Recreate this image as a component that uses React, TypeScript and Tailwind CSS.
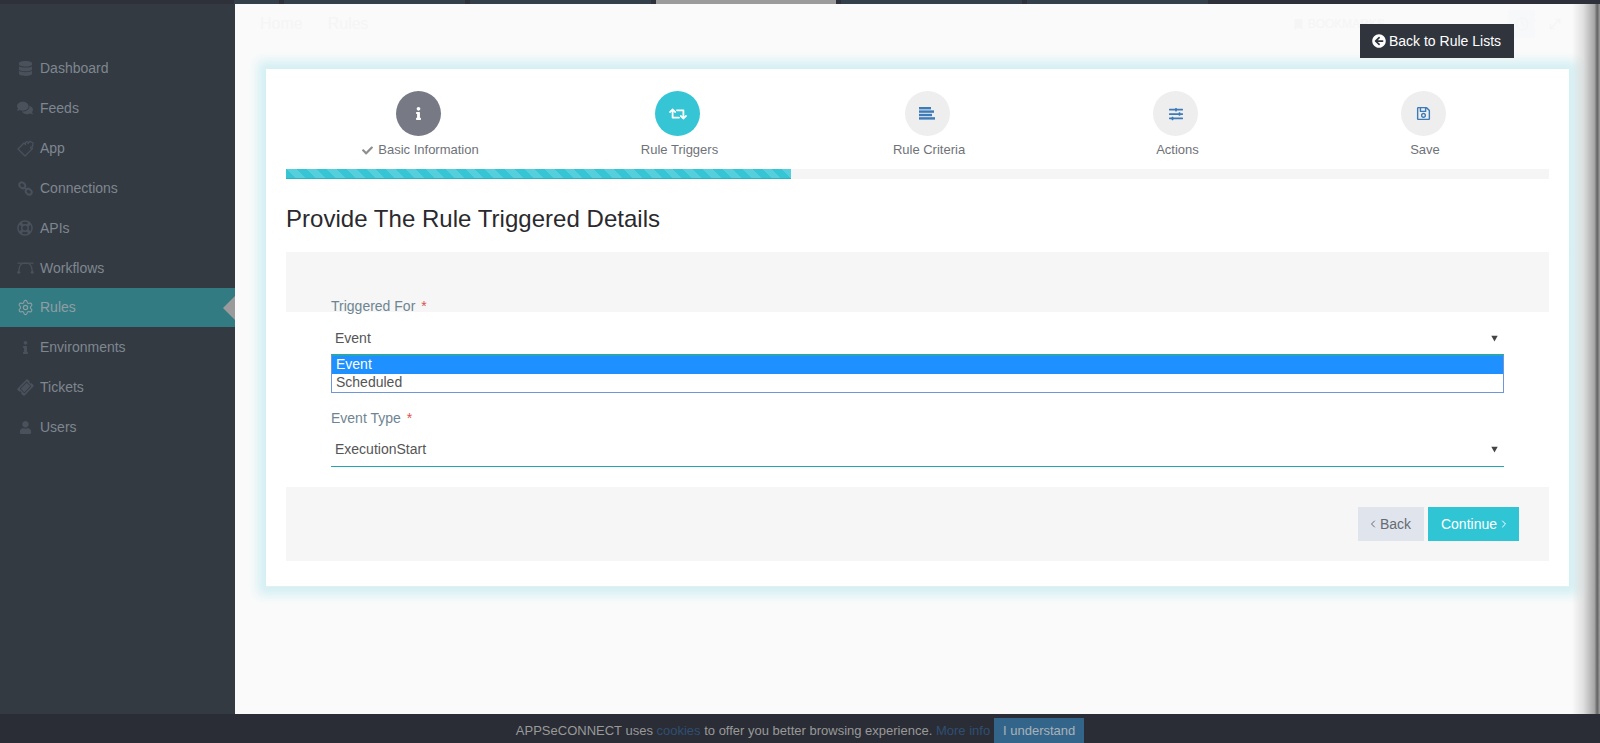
import React from "react";
import { FaDatabase, FaComments, FaInfo, FaUser, FaRetweet, FaSlidersH, FaRegSave, FaCheck, FaArrowCircleLeft, FaTicketAlt, FaRegLifeRing, FaBookmark } from "react-icons/fa";
import { Settings, ChevronLeft, ChevronRight, MoveDiagonal, Clock } from "lucide-react";

const PuzzleIcon = () => (
  <svg width="17" height="17" viewBox="0 0 17 17" fill="none" stroke="currentColor" strokeWidth="1.3" strokeLinejoin="round">
    <path d="M1 9 L7 3 L8.5 4.5 C8 3 9 1.5 10.5 1.8 C11.5 2 11.5 3 11 3.5 L13 1.2 L16 3 L15.5 7 C14.5 6.5 13.5 7 13.7 8 C14 9 15 9 15.5 8.6 L8 16 Z" />
  </svg>
);
const LinkIcon = () => (
  <svg width="15" height="15" viewBox="0 0 15 15" fill="none" stroke="currentColor" strokeWidth="2">
    <ellipse cx="4.3" cy="4.3" rx="2.6" ry="3.2" transform="rotate(-45 4.3 4.3)" />
    <ellipse cx="10.7" cy="10.7" rx="2.6" ry="3.2" transform="rotate(-45 10.7 10.7)" />
    <path d="M6 6 L9 9" />
  </svg>
);
const CurveIcon = () => (
  <svg width="17" height="13" viewBox="0 0 17 13" fill="none" stroke="currentColor" strokeWidth="1.3">
    <path d="M1.8 9 C2 3 4 1.2 8.5 1.2 C13 1.2 15 3 15.2 9" />
    <circle cx="1.8" cy="10.3" r="1.5" fill="currentColor" stroke="none" />
    <circle cx="15.2" cy="10.3" r="1.5" fill="currentColor" stroke="none" />
    <path d="M0.5 1.2 H16.5" strokeWidth="1.2" />
  </svg>
);
const BarsIcon = () => (
  <svg width="16" height="13" viewBox="0 0 16 13" fill="currentColor">
    <rect x="0" y="0" width="12" height="2.4" />
    <rect x="0" y="3.4" width="15" height="2.4" />
    <rect x="0" y="6.8" width="13" height="2.4" />
    <rect x="0" y="10.2" width="16" height="2.4" />
  </svg>
);

const navItems: { label: string; icon: React.ReactNode; active?: boolean }[] = [
  { label: "Dashboard", icon: <FaDatabase size={15} /> },
  { label: "Feeds", icon: <FaComments size={16} /> },
  { label: "App", icon: <PuzzleIcon /> },
  { label: "Connections", icon: <LinkIcon /> },
  { label: "APIs", icon: <FaRegLifeRing size={16} /> },
  { label: "Workflows", icon: <CurveIcon /> },
  { label: "Rules", icon: <Settings size={17} strokeWidth={1.6} />, active: true },
  { label: "Environments", icon: <FaInfo size={13} /> },
  { label: "Tickets", icon: <FaTicketAlt size={15} className="-rotate-45" /> },
  { label: "Users", icon: <FaUser size={13} /> },
];

const steps = [
  { label: "Basic Information", icon: <FaInfo size={13} />, circle: "bg-[#777a85] text-white", check: true },
  { label: "Rule Triggers", icon: <FaRetweet size={18} />, circle: "bg-[#36c5d4] text-white" },
  { label: "Rule Criteria", icon: <BarsIcon />, circle: "bg-[#eeeeee] text-[#3c7ab8]" },
  { label: "Actions", icon: <FaSlidersH size={14} />, circle: "bg-[#eeeeee] text-[#3c7ab8]" },
  { label: "Save", icon: <FaRegSave size={15} />, circle: "bg-[#eeeeee] text-[#3c7ab8]" },
];

const Caret = () => (
  <svg width="7" height="7" viewBox="0 0 7 7" className="text-[#444]" fill="currentColor">
    <path d="M0.3 0.8 H6.7 L3.5 6.5 Z" />
  </svg>
);

const Tab = ({ w, grey }: { w: string; grey?: boolean }) => (
  <div className={`${w} h-full ${grey ? "bg-[#9b9b9b]" : "bg-[#33404c]"}`} />
);

export default function App() {
  return (
    <div className="relative flex h-[743px] w-[1600px] flex-col overflow-hidden bg-[#fafafa] font-['Liberation_Sans',Arial,sans-serif] text-[14px]">
      {/* top strip */}
      <div className="flex h-1 shrink-0 gap-[5px] bg-[#2e3139] pl-[234px]">
        <Tab w="w-[45px]" />
        <Tab w="w-[181px]" />
        <Tab w="w-[181px]" />
        <Tab w="w-[180px]" grey />
        <Tab w="w-[181px]" />
        <Tab w="w-[181px]" />
      </div>

      <div className="flex min-h-0 flex-1">
        {/* sidebar */}
        <aside className="w-[235px] shrink-0 bg-[#343a42] pt-11">
          {navItems.map((it) => (
            <div
              key={it.label}
              className={`relative flex items-center ${it.active ? "h-[39px] bg-[#337b82] text-[#8f9ea3]" : "h-10 text-[#7e8790]"}`}
            >
              <span className={`flex w-10 shrink-0 items-center justify-center pl-[12px] pr-[2px] ${it.active ? "text-[#8f9ea3]" : "text-[#4b515b]"}`}>
                {it.icon}
              </span>
              <span>{it.label}</span>
              {it.active && (
                <span className="absolute right-0 top-2 h-0 w-0 border-y-[12px] border-r-[12px] border-y-transparent border-r-[#9b9b9b]" />
              )}
            </div>
          ))}
        </aside>

        {/* main */}
        <main className="relative min-w-0 flex-1">
          <header className="flex h-[65px] items-start justify-between pl-[25px] pr-[37px] pt-[6px] text-[16px] text-[#f5f5f5]">
            <div className="flex h-7 items-center gap-[25px]">
              <span>Home</span>
              <span>Rules</span>
            </div>
            <div className="flex h-7 items-center text-[12px]">
              <FaBookmark size={11} />
              <span className="ml-[4px]">BOOKMARKS</span>
              <span className="ml-[123px] flex h-7 w-[27px] items-center justify-center bg-[#f6f8fa]">
                <Clock size={14} />
              </span>
              <MoveDiagonal size={16} className="ml-3" />
            </div>
          </header>

          <a className="absolute left-[1125px] top-5 z-10 flex h-[34px] w-[154px] items-center justify-center gap-[3px] bg-[#30353d] pr-[1px] text-white">
            <FaArrowCircleLeft size={14} />
            <span>Back to Rule Lists</span>
          </a>

          {/* card */}
          <section className="ml-[31px] h-[518px] w-[1303px] border-b border-[#e4eff1] bg-white px-5 pt-[22px] shadow-[0_0_10px_8px_#d3eff3]">
            <div className="grid grid-cols-[265px_253px_246px_251px_244px]">
              {steps.map((s) => (
                <div key={s.label} className="flex flex-col items-center">
                  <div className={`flex h-[45px] w-[45px] items-center justify-center rounded-full ${s.circle}`}>{s.icon}</div>
                  <div className="ml-1 mt-1 flex h-[20px] items-center gap-[5px] text-[13px] text-[#6f7278]">
                    {s.check && <FaCheck size={11} className="text-[#8e8e8e]" />}
                    <span>{s.label}</span>
                  </div>
                </div>
              ))}
            </div>

            <div className="mt-[9px] h-[10px] bg-[#f5f5f5]">
              <div className="h-full w-[505px] border-b border-[#2bb3c2] bg-[#36c5d4] bg-[repeating-linear-gradient(45deg,#36c5d4_0,#36c5d4_7px,#55cfdb_7px,#55cfdb_14px)]" />
            </div>

            <h2 className="mt-[26px] text-[24px] leading-[28px] tracking-[0.03px] text-[#2a2a2e]">Provide The Rule Triggered Details</h2>

            <div className="mt-[19px] h-[60px] bg-[#f6f6f6]" />

            <div className="-mt-[16px] px-[45px]">
              <label className="flex h-5 items-center gap-[6px] text-[#6e8591]">
                <span>Triggered For</span>
                <span className="text-[#d9534f]">*</span>
              </label>
              <div className="relative flex h-[39px] items-center justify-between pl-1 pr-[6px] pt-[5px] text-[#555555]">
                <span>Event</span>
                <Caret />
                <div className="absolute left-0 right-0 top-[38px] z-10 border border-t-2 border-[#6f96d8] border-t-[#2aa7ae] bg-white">
                  <div className="flex h-[18px] items-center bg-[#1e90ff] pb-[2px] pl-[4px] text-white">Event</div>
                  <div className="flex h-[18px] items-center pb-[2px] pl-[4px]">Scheduled</div>
                </div>
              </div>

              <label className="mt-[53px] flex h-5 items-center gap-[6px] text-[#6e8591]">
                <span>Event Type</span>
                <span className="text-[#d9534f]">*</span>
              </label>
              <div className="flex h-[39px] items-center justify-between border-b border-[#22a7ae] pl-1 pr-[6px] pt-[5px] text-[#555555]">
                <span>ExecutionStart</span>
                <Caret />
              </div>
            </div>

            <div className="mt-5 flex h-[74px] items-start justify-end gap-1 bg-[#f6f6f6] pr-[30px] pt-5">
              <button className="flex h-[34px] w-[66px] items-center justify-center bg-[#e0e4ec] pr-1 text-[#666b72]">
                <ChevronLeft size={12} strokeWidth={2} />
                <span className="ml-[1px]">Back</span>
              </button>
              <button className="flex h-[34px] w-[91px] items-center justify-center bg-[#30c5d4] pl-1 text-white">
                <span className="mr-[1px]">Continue</span>
                <ChevronRight size={12} strokeWidth={2} />
              </button>
            </div>
          </section>

          {/* right edge shade of the modal */}
          <div className="pointer-events-none absolute inset-y-0 right-0 z-20 w-[28px] bg-[linear-gradient(to_right,rgba(120,120,120,0)_0%,rgba(120,120,120,0.2)_40%,rgba(110,110,110,0.6)_80%,rgba(90,90,90,0.95)_90%,rgba(150,150,150,0.9)_100%)]" />
        </main>
      </div>

      {/* cookie bar */}
      <footer className="flex h-[29px] shrink-0 items-end justify-center bg-[#2a2d35] text-[13px] text-[#999999]">
        <div className="flex h-[25px] items-center">
          <span>APPSeCONNECT uses&nbsp;</span>
          <a className="text-[#2f4f73]">cookies</a>
          <span>&nbsp;to offer you better browsing experience.&nbsp;</span>
          <a className="text-[#2f4f73]">More info</a>
          <button className="ml-1 flex h-[25px] w-[90px] items-center justify-center bg-[#33658a] text-[#a9b2b9]">I understand</button>
        </div>
      </footer>
    </div>
  );
}
